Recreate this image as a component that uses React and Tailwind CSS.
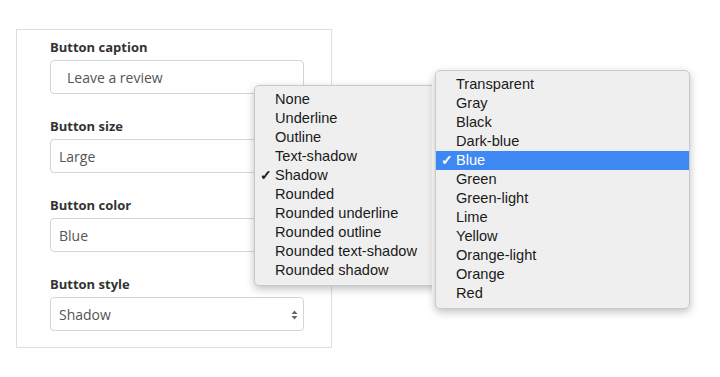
const STYLES = ['None', 'Underline', 'Outline', 'Text-shadow', 'Shadow', 'Rounded', 'Rounded underline', 'Rounded outline', 'Rounded text-shadow', 'Rounded shadow'];
const COLORS = ['Transparent', 'Gray', 'Black', 'Dark-blue', 'Blue', 'Green', 'Green-light', 'Lime', 'Yellow', 'Orange-light', 'Orange', 'Red'];

function Field({ label, value, inset, select }) {
  return (
    <div className="flex flex-col">
      <label className="text-[13px] leading-[17px] font-bold text-[#333] mb-[4px]">{label}</label>
      <div className={`relative h-[34px] w-[254px] border border-[#d5d5d5] rounded-[4px] bg-white flex items-center text-[14px] text-[#555] ${inset ? 'pl-[16px]' : 'pl-[8px]'}`}>
        {value}
        {select && (
          <svg className="absolute right-[5px] top-[12px]" width="7" height="10" viewBox="0 0 7 10">
            <path d="M3.5 0.5 L6.5 4 L0.5 4 Z M0.5 6 L6.5 6 L3.5 9.5 Z" fill="#666" />
          </svg>
        )}
      </div>
    </div>
  );
}

function Menu({ items, selected, highlight }) {
  return (
    <div className="rounded-[5px] bg-[#efefef] border border-[#c9c9c9] shadow-[0_3px_8px_rgba(0,0,0,0.25)] pt-[4px] pb-[5px] text-[14.6px] leading-[19px] text-[#1a1a1a]" style={{ fontFamily: '"Liberation Sans", Arial, sans-serif' }}>
      {items.map(it => {
        const sel = it === selected;
        const hi = sel && highlight;
        return (
          <div key={it} className={`relative h-[19px] pl-[20px] whitespace-nowrap ${hi ? 'bg-[#3e88f4] text-white' : ''}`}>
            {sel && <span className="absolute left-[5px] top-0 text-[14px] font-bold">✓</span>}
            {it}
          </div>
        );
      })}
    </div>
  );
}

export default function App() {
  return (
    <div className="relative w-[720px] h-[377px] bg-white overflow-hidden" style={{ fontFamily: '"Open Sans", "Liberation Sans", sans-serif' }}>
      <div className="ml-[16px] mt-[29px] w-[316px] h-[319px] border border-[#dedede] pl-[33px] pt-[9px] flex flex-col gap-[24px]">
        <Field label="Button caption" value="Leave a review" inset />
        <Field label="Button size" value="Large" />
        <Field label="Button color" value="Blue" />
        <Field label="Button style" value="Shadow" select />
      </div>

      <div className="absolute left-[254px] top-[85px] w-[190px]">
        <Menu items={STYLES} selected="Shadow" />
      </div>

      <div className="absolute left-[432px] top-[67px] bg-white pl-[3px] pt-[3px] pb-[3px]">
        <div className="w-[255px]">
          <Menu items={COLORS} selected="Blue" highlight />
        </div>
      </div>
    </div>
  );
}
